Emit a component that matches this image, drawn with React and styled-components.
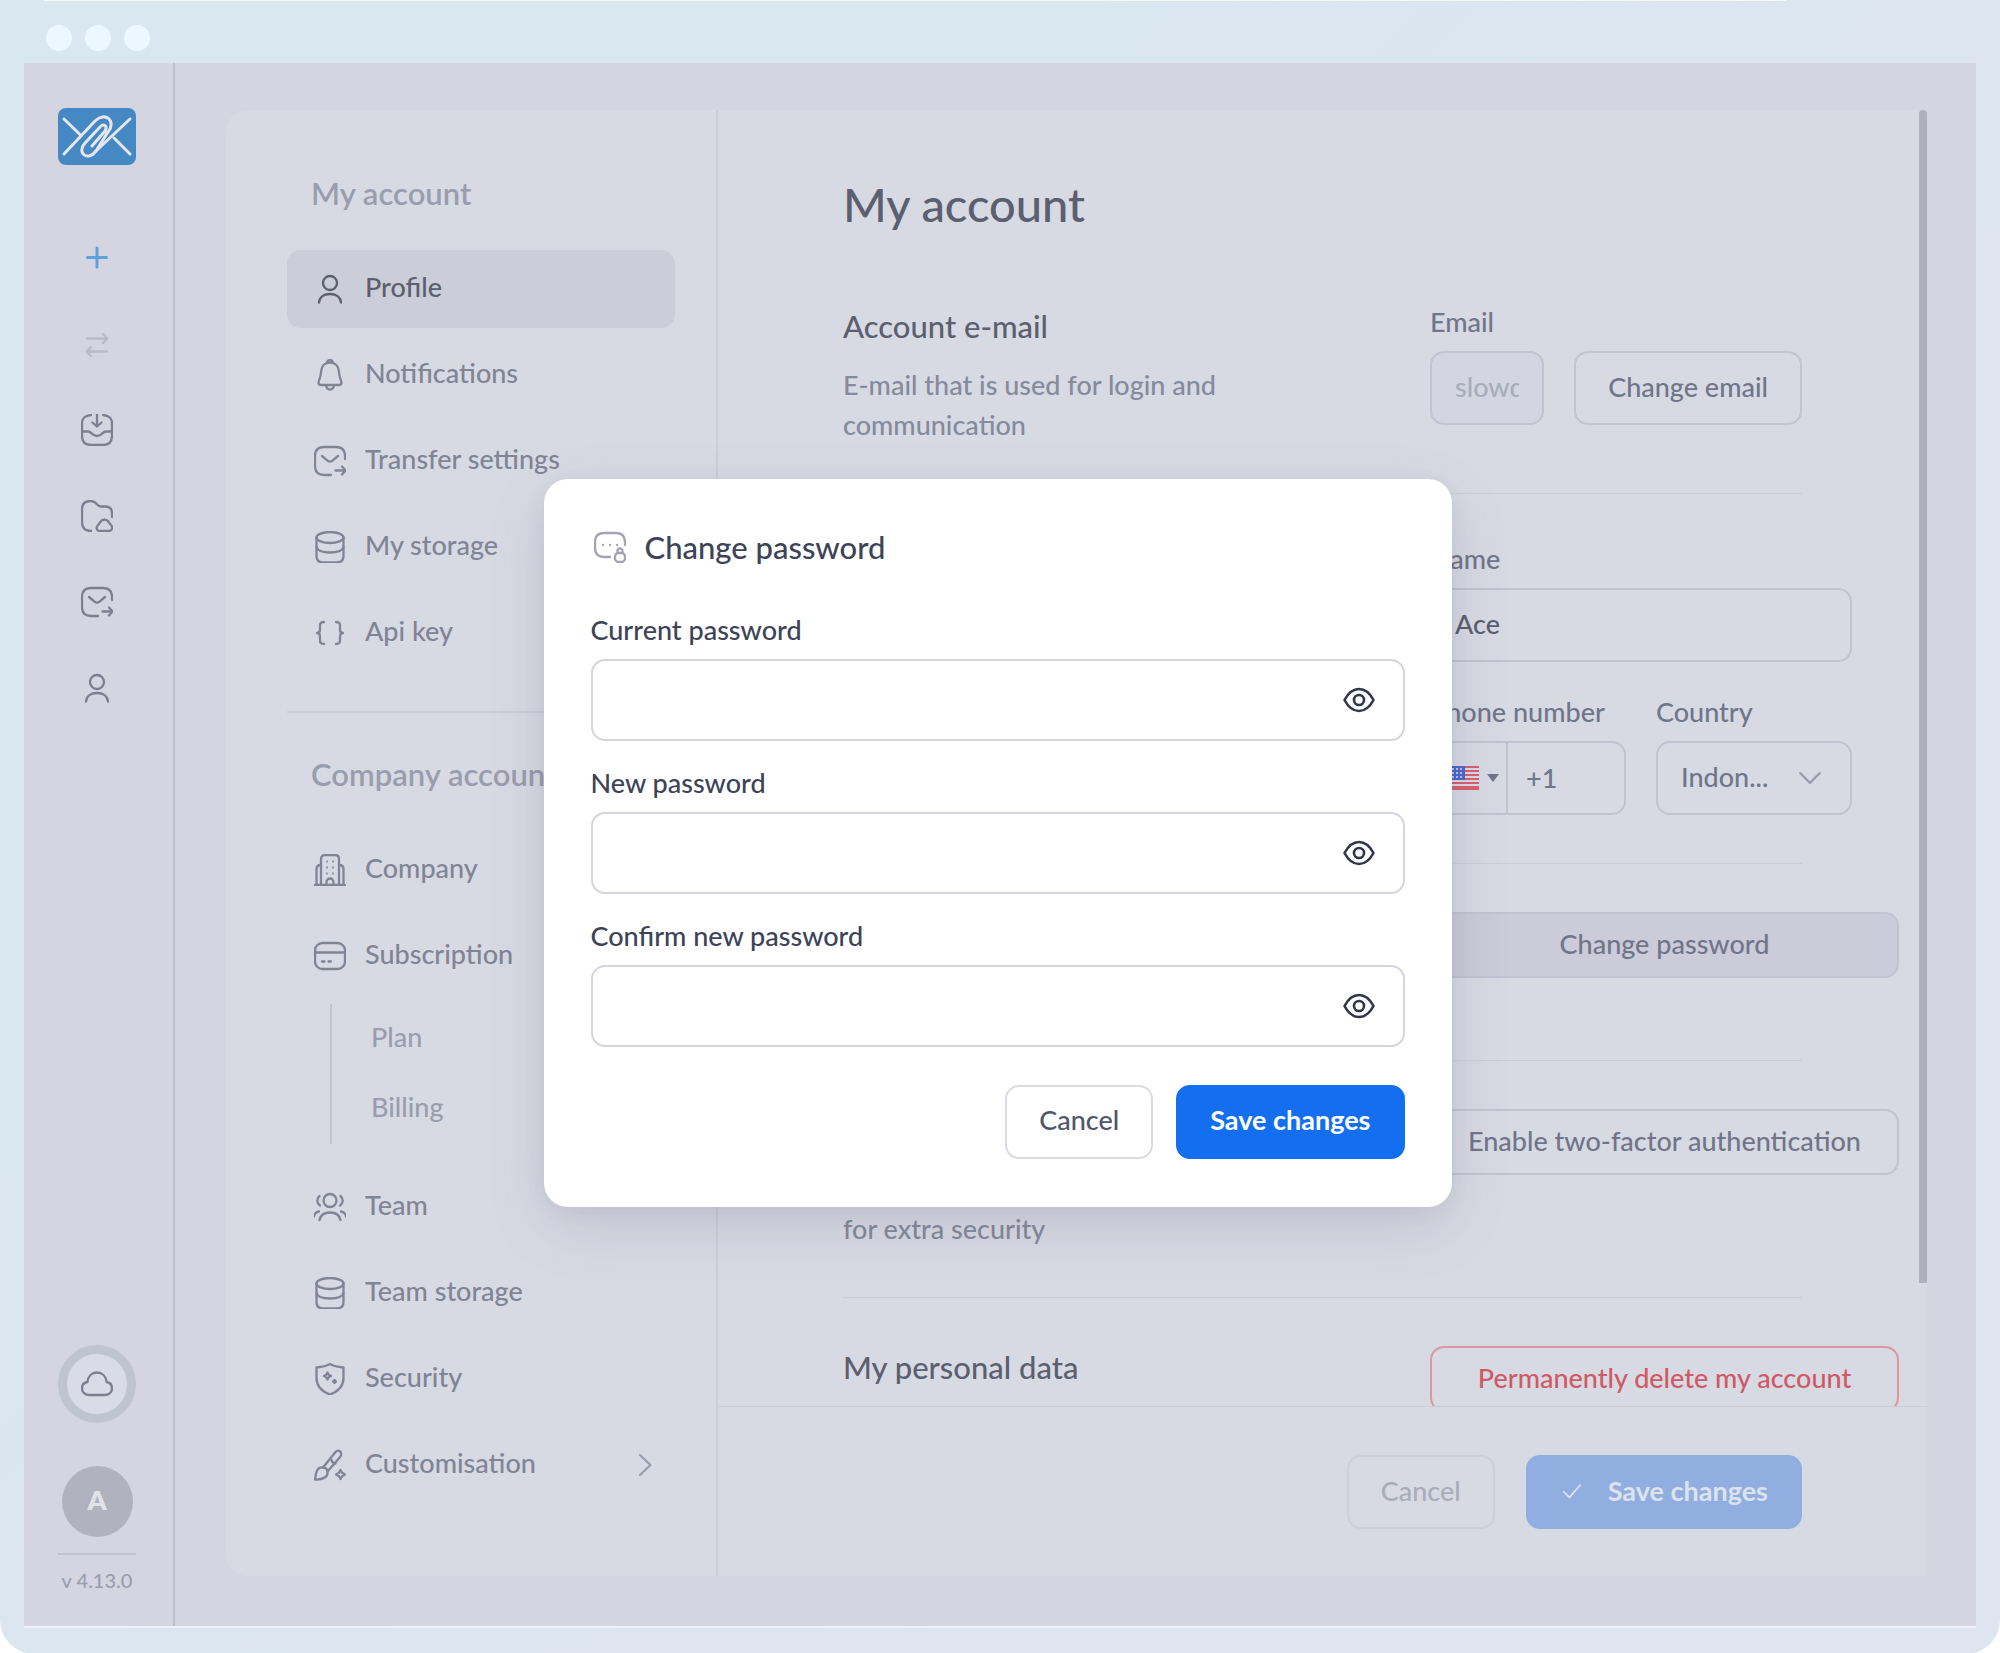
import React, { useState } from 'react';
import styled, { createGlobalStyle, css } from 'styled-components';

const colors = {
    frameStart: '#d9e7ef',
    frameEnd: '#dee4f0',
    app: '#d4d5e1',
    panel: '#d7dae3',
    line: '#cbced9',
    border: '#c1c4d0',
    title: '#5b5f6f',
    text: '#70758a',
    nav: '#808495',
    muted: '#9a9dae',
    faint: '#a9adb9',
    modalText: '#3d4358',
    primary: '#146ff0',
    danger: '#cf5a66',
};

const GlobalStyle = createGlobalStyle`
    * {
        box-sizing: border-box;
    }
    body {
        margin: 0;
        background-color: white;
        font-family: Lato, "Open Sans", sans-serif;
        font-size: 27px;
        font-weight: 500;
        line-height: 34px;
        color: ${colors.text};
    }
    h1, h2, p, ul {
        margin: 0;
        padding: 0;
        font-weight: 500;
    }
    ul {
        list-style: none;
    }
    a {
        color: inherit;
        text-decoration: none;
    }
    button, input, select {
        font: inherit;
        color: inherit;
    }
    button {
        cursor: pointer;
    }
`;

/* Icons */

const Svg = styled.svg`
    display: block;
    flex: none;
    width: ${p => p.$size || 32}px;
    height: ${p => p.$size || 32}px;
    fill: none;
    stroke: currentColor;
    stroke-width: ${p => p.$stroke || 2.3};
    stroke-linecap: round;
    stroke-linejoin: round;
`;

const icon = children => props => (
    <Svg viewBox="0 0 32 32" aria-hidden="true" {...props}>{children}</Svg>
);

const UserIcon = icon(<>
    <circle cx="16" cy="10" r="7" />
    <path d="M5 29.5c.5-5.500 5-8.500 11-8.500s10.500 3 11 8.500" />
</>);

const BellIcon = icon(<>
    <path d="M16 3.500c-5 0-8.300 3.500-8.800 8.500-.3 4-.9 6.500-2.300 10-.9 2.400 0 4 2 4h18.200c2 0 2.900-1.600 2-4-1.400-3.500-2-6-2.300-10-.5-5-3.800-8.500-8.800-8.500z" />
    <path d="M13 4a3 3 0 0 1 6 0M12 26.500c.5 2.500 2 4 4 4s3.500-1.500 4-4" />
</>);

const MailSendIcon = icon(<>
    <path d="M31 14v-3c0-6-3-9-9-9H10c-6 0-9 3-9 9v10c0 6 3 9 9 9h7" />
    <path d="M8 11l5.500 4.600a4 4 0 0 0 5 0L24 11" />
    <path d="M21.500 25.500h10M28 21.500l3.700 4-3.700 4" />
</>);

const StorageIcon = icon(<>
    <ellipse cx="16" cy="6.500" rx="13.500" ry="5.500" />
    <path d="M2.500 6.500V25c0 4 2.500 6.500 7 6.500h13c4.500 0 7-2.500 7-6.500V6.500" />
    <path d="M2.500 16c1 3.500 6 5.500 13.500 5.500S28.500 19.500 29.500 16" />
</>);

const BracesIcon = icon(<>
    <path d="M10 5c-3 0-4 1-4 3.500v4c0 2.500-1 3.500-3 3.500 2 0 3 1 3 3.500v4c0 2.500 1 3.500 4 3.500" />
    <path d="M22 5c3 0 4 1 4 3.500v4c0 2.500 1 3.500 3 3.500-2 0-3 1-3 3.500v4c0 2.500-1 3.500-4 3.500" />
</>);

const CompanyIcon = icon(<>
    <path d="M1 31h30M7 31V5c0-2.500 1.500-4 4-4h10c2.500 0 4 1.500 4 4v26" />
    <path d="M2.500 31V15c0-2.500 1.500-4 4.500-4M29.500 31V15c0-2.500-1.500-4-4.500-4" />
    <path d="M12.500 31v-3a3.500 3.500 0 0 1 7 0v3" />
    <path strokeWidth="1.500" d="M13 7v1M19 7v1M13 13v1M19 13v1M13 19v1M19 19v1" />
</>);

const CardIcon = icon(<>
    <rect x="1" y="3" width="30" height="26" rx="7.500" />
    <path d="M1 12.500h30M8 21.500h2.500M14.500 21.500H17" />
</>);

const TeamIcon = icon(<>
    <circle cx="16" cy="9.500" r="6.500" />
    <path d="M5.500 29c1-5 5-7.500 10.500-7.500S25.500 24 26.500 29" />
    <path d="M5.500 5c-3 2.500-3 7 .5 9.500M26.500 5c3 2.500 3 7-.5 9.500M0 25.500c.5-3 2-4.500 5-5M32 25.500c-.5-3-2-4.500-5-5" />
</>);

const ShieldIcon = icon(<>
    <path d="M16 1c3.500 2 8 3 13.500 3.500V15c0 8-5.500 13.500-13.500 16.500C8 28.500 2.500 23 2.500 15V4.500C8 4 12.500 3 16 1z" />
    <path d="M13.500 9.500l1.200 2.300 2.300 1.200-2.300 1.200-1.200 2.300-1.200-2.300L10 13l2.300-1.200z" />
    <path d="M20.500 17l1.500 1.500-1.500 1.500-1.500-1.500z" />
</>);

const BrushIcon = icon(<>
    <path d="M9 18.500L21.500 3c2-2.500 6.500-1.500 5.500 3-.3 1.200-.8 2-1.500 2.800L13.500 22.500" />
    <path d="M9 18.500c2.500.2 4.300 1.800 4.500 4 .8 5-4 8.500-12.500 8 .5-2.500.5-4.500 1.500-7.500 1-3.200 3.500-4.800 6.500-4.500zM17.500 11c.5 2 2 3.500 4 3.500" />
    <path d="M26.500 21l1.500 2.800 3 1.700-3 1.700-1.500 2.800-1.500-2.800-3-1.700 3-1.700z" />
</>);

const InboxIcon = icon(<>
    <path d="M10 1C3.500 1.500 1 4 1 10v12c0 6 3 9 9 9h12c6 0 9-3 9-9V10c0-6-2.500-8.500-9-9" />
    <path d="M16 0v12M11.500 8.500l4.500 4 4.500-4M1 17.500h6c3.500 0 4 4.500 9 4.500s5.500-4.500 9-4.500h6" />
</>);

const FolderCloudIcon = icon(<>
    <path d="M31 17v-4c0-4.500-2.500-6.500-7-6.500h-4c-2 0-2.800-.8-4-2.300C14.300 2 12.500 1 9.500 1 4 1 1 3.500 1 9v13c0 6 3 9 9 9" />
    <path d="M19 31h8.500c3 0 4.500-2.500 3.200-5-.6-1.200-1.500-1.600-2.200-2.800-2.500-4.800-7.500-4.800-10 0-.6 1.200-1.400 1.600-2.200 2.800-1.500 2.500-.3 5 2.700 5z" />
</>);

const CloudIcon = icon(
    <path d="M8.500 27h15c4.500 0 7.500-3 7.500-6.500s-2-6-5.500-6.500C25 8 21 4.500 16 4.500S7 8 6.500 14C3 14.500 1 17 1 20.500S4 27 8.500 27z" />
);

const TransferIcon = icon(
    <path d="M6 10.500h20M22 6l4.500 4.500L22 15M26 23.500H6M10 19l-4.500 4.500L10 28" />
);

const PlusIcon = icon(<path d="M16 6v19M6.500 15.500h19" />);

const PasswordIcon = icon(<>
    <path d="M31 14v-2.500C31 5 28 2 22 2H10C4 2 1 5 1 11v6c0 6 3 9 9 9h6" />
    <path d="M9 14h.1M16 14h.1M23 14h.1" />
    <rect x="21" y="22" width="10" height="9" rx="3.500" />
    <path d="M23.500 22v-2a2.500 2.500 0 0 1 5 0v2" />
</>);

const EyeIcon = icon(<>
    <path d="M1.500 16C5.500 8.500 10 5 16 5s10.500 3.500 14.500 11C26.500 23.500 22 27 16 27S5.500 23.500 1.500 16z" />
    <circle cx="16" cy="16" r="5" />
</>);

const ChevronRight = icon(<path d="M11 6l10.500 10L11 26" />);
const ChevronDown = icon(<path d="M4 10l12 12 12-12" />);
const CheckIcon = icon(<path d="M5 17l7.500 7.500L27 8" />);

const LogoSvg = styled.svg`
    display: block;
    width: 78px;
    height: 57px;
`;

const Logo = () => (
    <LogoSvg viewBox="0 0 78 57" role="img" aria-label="Home">
        <rect width="78" height="57" rx="8" fill="#4489c4" />
        <g fill="none" stroke="#e6e6f0" strokeWidth="3" strokeLinecap="round">
            <path d="M6 11l17 16.500M72 46L56 30" />
            <path d="M6 46L37 13c10-10 22 0 13 11L38 43c-8 11-20 2-11-8l15-16c4-4 8-1 5 4L34 38" />
            <path d="M38 43L72 11" />
        </g>
    </LogoSvg>
);

const FlagSvg = styled.svg`
    display: block;
    width: 30px;
    height: 24px;
`;

const Flag = () => (
    <FlagSvg viewBox="0 0 30 24" aria-hidden="true">
        <rect width="30" height="24" fill="#dadbe6" />
        {[0, 4, 8, 12, 16, 20].map(y => (
            <rect key={y} y={y} width="30" height="2" fill="#d9606f" />
        ))}
        <rect y="22" width="30" height="2" fill="#d9606f" />
        <rect width="16" height="14" fill="#4d68cf" />
        {[3, 7, 11].map(y => [3, 7, 11].map(x => (
            <circle key={`${x}-${y}`} cx={x + 1} cy={y} r="1" fill="#dfe3f4" />
        )))}
    </FlagSvg>
);

/* Browser frame */

const Frame = styled.div`
    display: flex;
    flex-direction: column;
    min-height: 100vh;
    padding: 0 24px 28px;
    border-radius: 0 0 34px 34px;
    background: linear-gradient(135deg, ${colors.frameStart} 30%, ${colors.frameEnd} 70%);
`;

const FrameHighlight = styled.div`
    height: 1px;
    margin: 0 190px 0 20px;
    background-color: #f4f9fc;
`;

const Dots = styled.div`
    display: flex;
    align-items: center;
    gap: 13px;
    height: 62px;
    padding: 12px 22px 0;
`;

const Dot = styled.span`
    width: 26px;
    height: 26px;
    border-radius: 50%;
    background-color: #ebf8ff;
`;

const Window = styled.div`
    position: relative;
    flex: 1;
    display: flex;
    background-color: ${colors.app};
    box-shadow: 0 2px 0 #eef1fa;
`;

/* Sidebar */

const Sidebar = styled.nav`
    flex: none;
    display: flex;
    flex-direction: column;
    align-items: center;
    width: 151px;
    padding: 45px 3px 34px 0;
    border-right: 2px solid #bdbecc;
    color: #7d7e90;
`;

const SideLinks = styled.ul`
    margin-top: 50px;
`;

const SideLink = styled.a`
    display: flex;
    align-items: center;
    justify-content: center;
    width: 78px;
    height: 86px;
    color: ${p => p.$color || 'inherit'};
`;

const StorageRing = styled.div`
    display: flex;
    align-items: center;
    justify-content: center;
    width: 78px;
    height: 78px;
    margin-top: auto;
    border: 9px solid #c0c3d0;
    border-radius: 50%;
    background-color: #d9dce6;
`;

const Avatar = styled.div`
    display: flex;
    align-items: center;
    justify-content: center;
    width: 71px;
    height: 71px;
    margin: 43px 0 16px;
    padding-bottom: 3px;
    border-radius: 50%;
    background-color: #b0b2bd;
    color: #e0e2ea;
    font-weight: 800;
`;

const Version = styled.div`
    width: 78px;
    padding-top: 13px;
    border-top: 2px solid #c0c2ce;
    font-size: 20px;
    line-height: 24px;
    text-align: center;
    white-space: nowrap;
    color: ${colors.muted};
`;

/* Settings navigation */

const Panel = styled.div`
    flex: 1;
    display: flex;
    min-width: 0;
    margin: 47px 49px 50px 51px;
    border-radius: 22px 0 0 22px;
    background-color: ${colors.panel};
    overflow: hidden;
`;

const SettingsNav = styled.nav`
    flex: none;
    width: 492px;
    padding: 65px 41px 72px 61px;
    border-right: 2px solid ${colors.line};
    color: ${colors.nav};
`;

const NavTitle = styled.h2`
    padding: 0 24px;
    margin-bottom: 39px;
    font-size: 31px;
    font-weight: 600;
    line-height: 36px;
    color: ${colors.muted};
    white-space: nowrap;
`;

const NavList = styled.ul`
    display: flex;
    flex-direction: column;
    gap: 8px;
`;

const NavLink = styled.a`
    display: flex;
    align-items: center;
    gap: 19px;
    height: 78px;
    padding: 0 14px 0 27px;
    border-radius: 14px;
    white-space: nowrap;
    ${p => p.$active && css`
        background-color: #cbcdd8;
        color: ${colors.title};
    `}
`;

const NavLabel = styled.span`
    flex: 1;
    padding-bottom: 4px;
`;

const SubLinks = styled.ul`
    margin: 9px 0 16px 43px;
    border-left: 2px solid #c3c5d0;
    color: ${colors.muted};
`;

const SubLink = styled.a`
    display: flex;
    align-items: center;
    height: 70px;
    padding: 0 0 4px 39px;
`;

const NavDivider = styled.hr`
    height: 2px;
    margin: 39px 0 43px;
    border: 0;
    background-color: ${colors.line};
`;

/* Account form */

const Main = styled.main`
    flex: 1;
    display: flex;
    flex-direction: column;
    min-width: 0;
`;

const ScrollArea = styled.div`
    flex: 1 1 0;
    display: flex;
    min-height: 0;
`;

const Form = styled.div`
    flex: 1;
    min-width: 0;
    height: 100%;
    padding: 66px 117px 0 125px;
    overflow: hidden;
`;

const ScrollThumb = styled.div`
    flex: none;
    width: 8px;
    height: 1173px;
    border-radius: 4px 4px 0 0;
    background-color: #aeb0bd;
`;

const PageTitle = styled.h1`
    margin-bottom: 25px;
    font-size: 47px;
    line-height: 56px;
    color: ${colors.title};
`;

const Section = styled.section`
    display: grid;
    grid-template-columns: minmax(0, 1fr) 372px;
    align-items: start;
    min-height: ${p => p.$minHeight || 0}px;
    padding: 48px 0;
    border-bottom: ${p => (p.$last ? '0' : `1px solid ${colors.line}`)};
    > :last-child {
        grid-column: 2;
    }
`;

const SectionTitle = styled.h2`
    font-size: 31px;
    line-height: 42px;
    color: ${colors.title};
`;

const SectionText = styled.p`
    align-self: end;
    max-width: 400px;
    margin-top: 18px;
    line-height: 40px;
    color: #858a9c;
`;

const Fields = styled.div`
    display: flex;
    flex-direction: column;
    gap: 33px;
    width: 422px;
`;

const FieldRow = styled.div`
    display: flex;
    align-items: flex-end;
    gap: 30px;
`;

const Field = styled.div`
    flex: 1 1 0;
    display: flex;
    flex-direction: column;
    gap: 12px;
    min-width: 0;
`;

const Label = styled.label`
    white-space: nowrap;
`;

const control = css`
    width: 100%;
    height: 74px;
    padding: 0 23px 3px;
    border: 2px solid ${colors.border};
    border-radius: 14px;
    background-color: transparent;
    outline: none;
`;

const Input = styled.input`
    ${control}
    color: ${colors.title};
    &:disabled {
        background-color: #d3d5e1;
        color: ${colors.faint};
    }
`;

const SelectBox = styled.div`
    position: relative;
`;

const Select = styled.select`
    ${control}
    appearance: none;
`;

const SelectArrow = styled.span`
    position: absolute;
    top: 24px;
    right: 29px;
    pointer-events: none;
    color: ${colors.muted};
`;

const PhoneBox = styled.div`
    display: flex;
    height: 74px;
    border: 2px solid ${colors.border};
    border-radius: 14px;
    overflow: hidden;
`;

const FlagButton = styled.button`
    display: flex;
    align-items: center;
    gap: 8px;
    padding: 0 7px 0 17px;
    border: 0;
    border-right: 2px solid ${colors.border};
    background-color: transparent;
`;

const Caret = styled.span`
    border-left: 6px solid transparent;
    border-right: 6px solid transparent;
    border-top: 8px solid ${colors.text};
`;

const PhoneInput = styled.input`
    flex: 1;
    min-width: 0;
    padding: 0 18px;
    border: 0;
    outline: none;
    background-color: transparent;
`;

const Button = styled.button`
    display: flex;
    align-items: center;
    justify-content: center;
    gap: 24px;
    height: 74px;
    padding: 0 32px 3px;
    border: 2px solid ${colors.border};
    border-radius: 14px;
    background-color: transparent;
    white-space: nowrap;
    ${p => p.$wide && css`
        width: 469px;
        height: 66px;
    `}
    ${p => p.$pressed && css`
        background-color: #cbcbd9;
    `}
    ${p => p.$danger && css`
        border-color: #dc98a0;
        color: ${colors.danger};
    `}
    ${p => p.$primary && css`
        border-color: ${colors.primary};
        background-color: ${colors.primary};
        color: white;
        font-weight: 700;
    `}
    ${p => p.$light && css`
        border-color: #dcdbe3;
        color: #50566b;
    `}
    &:disabled {
        border-color: ${p => (p.$primary ? '#90aee0' : '#cdd0da')};
        background-color: ${p => (p.$primary ? '#90aee0' : 'transparent')};
        color: ${p => (p.$primary ? '#dce3ee' : colors.faint)};
    }
`;

const Footer = styled.footer`
    display: flex;
    justify-content: flex-end;
    gap: 31px;
    padding: 48px 125px 47px;
    border-top: 1px solid ${colors.line};
`;

/* Modal */

const Overlay = styled.div`
    position: absolute;
    inset: 0 5px 4px 0;
    display: flex;
    align-items: center;
    justify-content: center;
`;

const Modal = styled.form`
    width: 908px;
    padding: 47px 47px 48px;
    border-radius: 24px;
    background-color: white;
    box-shadow: 0 20px 60px rgba(70, 60, 90, 0.14), 0 4px 20px rgba(70, 60, 90, 0.06);
    color: ${colors.modalText};
`;

const ModalTitle = styled.h2`
    display: flex;
    align-items: center;
    gap: 19px;
    padding-left: 3px;
    margin-bottom: 45px;
    font-size: 31px;
    line-height: 42px;
    svg {
        color: #a5a3b2;
    }
`;

const ModalFields = styled.div`
    display: flex;
    flex-direction: column;
    gap: 25px;
`;

const PasswordBox = styled.div`
    display: flex;
    align-items: center;
    height: 82px;
    padding-right: 28px;
    border: 2px solid #d6d4de;
    border-radius: 14px;
`;

const PasswordInput = styled.input`
    flex: 1;
    min-width: 0;
    height: 100%;
    padding: 0 24px;
    border: 0;
    outline: none;
    background-color: transparent;
`;

const EyeButton = styled.button`
    padding: 0;
    border: 0;
    background-color: transparent;
    color: #32364a;
`;

const ModalActions = styled.div`
    display: flex;
    justify-content: flex-end;
    gap: 23px;
    margin-top: 38px;
`;

const accountLinks = [
    { label: 'Profile', Icon: UserIcon, active: true },
    { label: 'Notifications', Icon: BellIcon },
    { label: 'Transfer settings', Icon: MailSendIcon },
    { label: 'My storage', Icon: StorageIcon },
    { label: 'Api key', Icon: BracesIcon },
];

const companyLinks = [
    { label: 'Company', Icon: CompanyIcon },
    { label: 'Subscription', Icon: CardIcon, children: ['Plan', 'Billing'] },
    { label: 'Team', Icon: TeamIcon },
    { label: 'Team storage', Icon: StorageIcon },
    { label: 'Security', Icon: ShieldIcon },
    { label: 'Customisation', Icon: BrushIcon, more: true },
];

const sideLinks = [
    { label: 'New transfer', Icon: PlusIcon, color: '#5f9fdc', stroke: 3 },
    { label: 'Transfers', Icon: TransferIcon, color: '#b9bac8' },
    { label: 'Received', Icon: InboxIcon },
    { label: 'Storage', Icon: FolderCloudIcon },
    { label: 'Sent', Icon: MailSendIcon },
    { label: 'Contacts', Icon: UserIcon },
];

const MoreArrow = styled.span`
    color: ${colors.muted};
`;

const NavItems = ({ links }) => (
    <NavList>
        {links.map(({ label, Icon, active, more, children }) => (
            <li key={label}>
                <NavLink href="#" $active={active}>
                    <Icon />
                    <NavLabel>{label}</NavLabel>
                    {more && <MoreArrow><ChevronRight /></MoreArrow>}
                </NavLink>
                {children && (
                    <SubLinks>
                        {children.map(child => (
                            <li key={child}><SubLink href="#">{child}</SubLink></li>
                        ))}
                    </SubLinks>
                )}
            </li>
        ))}
    </NavList>
);

const PasswordField = ({ id, label }) => {
    const [visible, setVisible] = useState(false);
    return (
        <Field>
            <Label htmlFor={id}>{label}</Label>
            <PasswordBox>
                <PasswordInput id={id} type={visible ? 'text' : 'password'} />
                <EyeButton type="button" aria-label="Show password" onClick={() => setVisible(!visible)}>
                    <EyeIcon $stroke={2.6} />
                </EyeButton>
            </PasswordBox>
        </Field>
    );
};

const ChangePasswordModal = () => (
    <Overlay>
        <Modal role="dialog" aria-labelledby="modal-title" onSubmit={e => e.preventDefault()}>
            <ModalTitle id="modal-title"><PasswordIcon />Change password</ModalTitle>
            <ModalFields>
                <PasswordField id="current" label="Current password" />
                <PasswordField id="new" label="New password" />
                <PasswordField id="confirm" label="Confirm new password" />
            </ModalFields>
            <ModalActions>
                <Button type="button" $light>Cancel</Button>
                <Button type="submit" $primary>Save changes</Button>
            </ModalActions>
        </Modal>
    </Overlay>
);

const AccountForm = () => (
    <Form>
        <PageTitle>My account</PageTitle>
        <Section>
            <div>
                <SectionTitle>Account e-mail</SectionTitle>
                <SectionText>E-mail that is used for login and communication</SectionText>
            </div>
            <FieldRow>
                <Field>
                    <Label htmlFor="email">Email</Label>
                    <Input id="email" defaultValue="slowd" disabled />
                </Field>
                <Button type="button">Change email</Button>
            </FieldRow>
        </Section>
        <Section>
            <Fields>
                <Field>
                    <Label htmlFor="name">Name</Label>
                    <Input id="name" defaultValue="Ace" />
                </Field>
                <FieldRow>
                    <Field>
                        <Label htmlFor="phone">Phone number</Label>
                        <PhoneBox>
                            <FlagButton type="button" aria-label="Country code">
                                <Flag />
                                <Caret />
                            </FlagButton>
                            <PhoneInput id="phone" defaultValue="+1" />
                        </PhoneBox>
                    </Field>
                    <Field>
                        <Label htmlFor="country">Country</Label>
                        <SelectBox>
                            <Select id="country">
                                <option>Indon...</option>
                            </Select>
                            <SelectArrow><ChevronDown $size={26} $stroke={2.8} /></SelectArrow>
                        </SelectBox>
                    </Field>
                </FieldRow>
            </Fields>
        </Section>
        <Section $minHeight={197}>
            <Button type="button" $wide $pressed>Change password</Button>
        </Section>
        <Section $minHeight={237}>
            <SectionText>for extra security</SectionText>
            <Button type="button" $wide>Enable two-factor authentication</Button>
        </Section>
        <Section $last>
            <SectionTitle>My personal data</SectionTitle>
            <Button type="button" $wide $danger>Permanently delete my account</Button>
        </Section>
    </Form>
);

export default function App() {
    return (
        <>
            <GlobalStyle />
            <Frame>
                <FrameHighlight />
                <Dots>
                    <Dot />
                    <Dot />
                    <Dot />
                </Dots>
                <Window>
                    <Sidebar>
                        <a href="#"><Logo /></a>
                        <SideLinks>
                            {sideLinks.map(({ label, Icon, color, stroke }) => (
                                <li key={label}>
                                    <SideLink href="#" aria-label={label} $color={color}>
                                        <Icon $stroke={stroke} />
                                    </SideLink>
                                </li>
                            ))}
                        </SideLinks>
                        <StorageRing><CloudIcon /></StorageRing>
                        <Avatar>A</Avatar>
                        <Version>v 4.13.0</Version>
                    </Sidebar>
                    <Panel>
                        <SettingsNav>
                            <NavTitle>My account</NavTitle>
                            <NavItems links={accountLinks} />
                            <NavDivider />
                            <NavTitle>Company account</NavTitle>
                            <NavItems links={companyLinks} />
                        </SettingsNav>
                        <Main>
                            <ScrollArea>
                                <AccountForm />
                                <ScrollThumb />
                            </ScrollArea>
                            <Footer>
                                <Button type="button" disabled>Cancel</Button>
                                <Button type="button" $primary disabled>
                                    <CheckIcon $size={24} />
                                    Save changes
                                </Button>
                            </Footer>
                        </Main>
                    </Panel>
                    <ChangePasswordModal />
                </Window>
            </Frame>
        </>
    );
}
